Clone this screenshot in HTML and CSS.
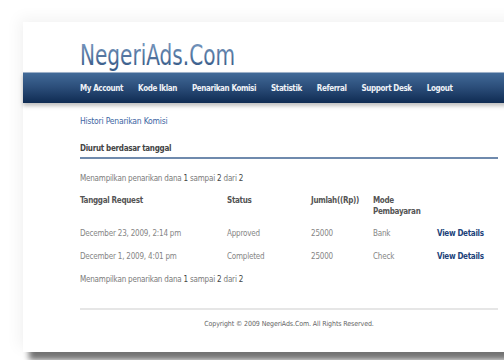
FILE: index.html
```html
<!DOCTYPE html>
<html>
<head>
<meta charset="utf-8">
<link rel="stylesheet" href="styles.css">
</head>
<body>
<div class="card">
  <header class="brand">
    <svg class="logo" width="240" height="32" viewBox="0 0 240 32">
      <defs>
        <linearGradient id="lg" x1="0" y1="4" x2="0" y2="26" gradientUnits="userSpaceOnUse">
          <stop offset="0" stop-color="#7393bb"/>
          <stop offset="1" stop-color="#3b5e8b"/>
        </linearGradient>
      </defs>
      <text x="0" y="25" font-size="28" textLength="155" lengthAdjust="spacingAndGlyphs" fill="url(#lg)" class="logo-text">NegeriAds.Com</text>
    </svg>
  </header>
  <nav class="nav">
    <a>My Account</a>
    <a>Kode Iklan</a>
    <a>Penarikan Komisi</a>
    <a>Statistik</a>
    <a>Referral</a>
    <a>Support Desk</a>
    <a>Logout</a>
  </nav>
  <main class="content">
    <h1 class="title">Histori Penarikan Komisi</h1>
    <h2 class="sort">Diurut berdasar tanggal</h2>
    <p class="count">Menampilkan penarikan dana <b>1</b> sampai <b>2</b> dari <b>2</b></p>
    <div class="table">
      <div class="th">Tanggal Request</div>
      <div class="th">Status</div>
      <div class="th">Jumlah((Rp))</div>
      <div class="th">Mode<br>Pembayaran</div>
      <div class="th"></div>

      <div class="td">December 23, 2009, 2:14 pm</div>
      <div class="td">Approved</div>
      <div class="td">25000</div>
      <div class="td">Bank</div>
      <div class="td link">View Details</div>

      <div class="td">December 1, 2009, 4:01 pm</div>
      <div class="td">Completed</div>
      <div class="td">25000</div>
      <div class="td">Check</div>
      <div class="td link">View Details</div>
    </div>
    <p class="count bottom">Menampilkan penarikan dana <b>1</b> sampai <b>2</b> dari <b>2</b></p>
    <footer class="footer">Copyright © 2009 NegeriAds.Com. All Rights Reserved.</footer>
  </main>
</div>
</body>
</html>
```
FILE: styles.css
```css
html, body {
  margin: 0;
  padding: 0;
  background: #ffffff;
  overflow: hidden;
  width: 504px;
  height: 360px;
}
body {
  font-family: "DejaVu Sans Condensed", "DejaVu Sans", sans-serif;
  color: #777;
}
.card {
  margin: 22px 0 0 23px;
  width: 500px;
  height: 330px;
  background: #fff;
  box-shadow: 6px 8px 6px rgba(0,0,0,0.55), -4px -4px 14px rgba(0,0,0,0.05);
}
.brand {
  height: 50px;
  padding: 18px 0 0 57px;
  box-sizing: border-box;
}
.logo {
  display: block;
  overflow: visible;
}
.logo-text {
  font-family: "DejaVu Sans Condensed", "DejaVu Sans", sans-serif;
}
.nav {
  height: 31px;
  box-sizing: border-box;
  border-top: 1px solid #9db0c8;
  background: linear-gradient(#426a98, #2a4c78 50%, #0f2b52);
  padding-left: 57px;
  display: flex;
  align-items: center;
  gap: 15px;
  white-space: nowrap;
  box-shadow: 0 3px 4px rgba(0,0,0,0.25);
}
.nav a {
  color: #eef2f7;
  font-weight: bold;
  font-size: 8px;
  letter-spacing: -0.4px;
}
.content {
  padding-left: 57px;
  width: 418px;
}
.title {
  margin: 11px 0 0;
  font-size: 8.5px;
  line-height: 14px;
  font-weight: normal;
  color: #3d66a3;
  letter-spacing: -0.2px;
}
.sort {
  margin: 14px 0 0;
  font-size: 8px;
  line-height: 14px;
  font-weight: bold;
  color: #444;
  letter-spacing: -0.3px;
  padding-bottom: 1px;
  border-bottom: 2px solid #6f8aad;
}
.count {
  margin: 13px 0 0;
  font-size: 8px;
  line-height: 14px;
  color: #7a7a7a;
  letter-spacing: -0.2px;
}
.count b {
  font-weight: normal;
  color: #444;
}
.count.bottom {
  margin-top: 5px;
}
.table {
  margin-top: 9px;
  display: grid;
  grid-template-columns: 147px 84px 62px 64px auto;
  white-space: nowrap;
}
.th {
  font-size: 8px;
  line-height: 11px;
  font-weight: bold;
  color: #555;
  letter-spacing: -0.3px;
  padding-bottom: 5px;
}
.td {
  font-size: 8px;
  line-height: 23px;
  color: #858585;
  letter-spacing: -0.2px;
}
.td.link {
  font-weight: bold;
  color: #21427a;
  letter-spacing: -0.3px;
}
.footer {
  margin-top: 21px;
  border-top: 2px solid #e6e6e6;
  text-align: center;
  font-size: 7px;
  line-height: 28px;
  color: #666;
  letter-spacing: -0.1px;
}
```
